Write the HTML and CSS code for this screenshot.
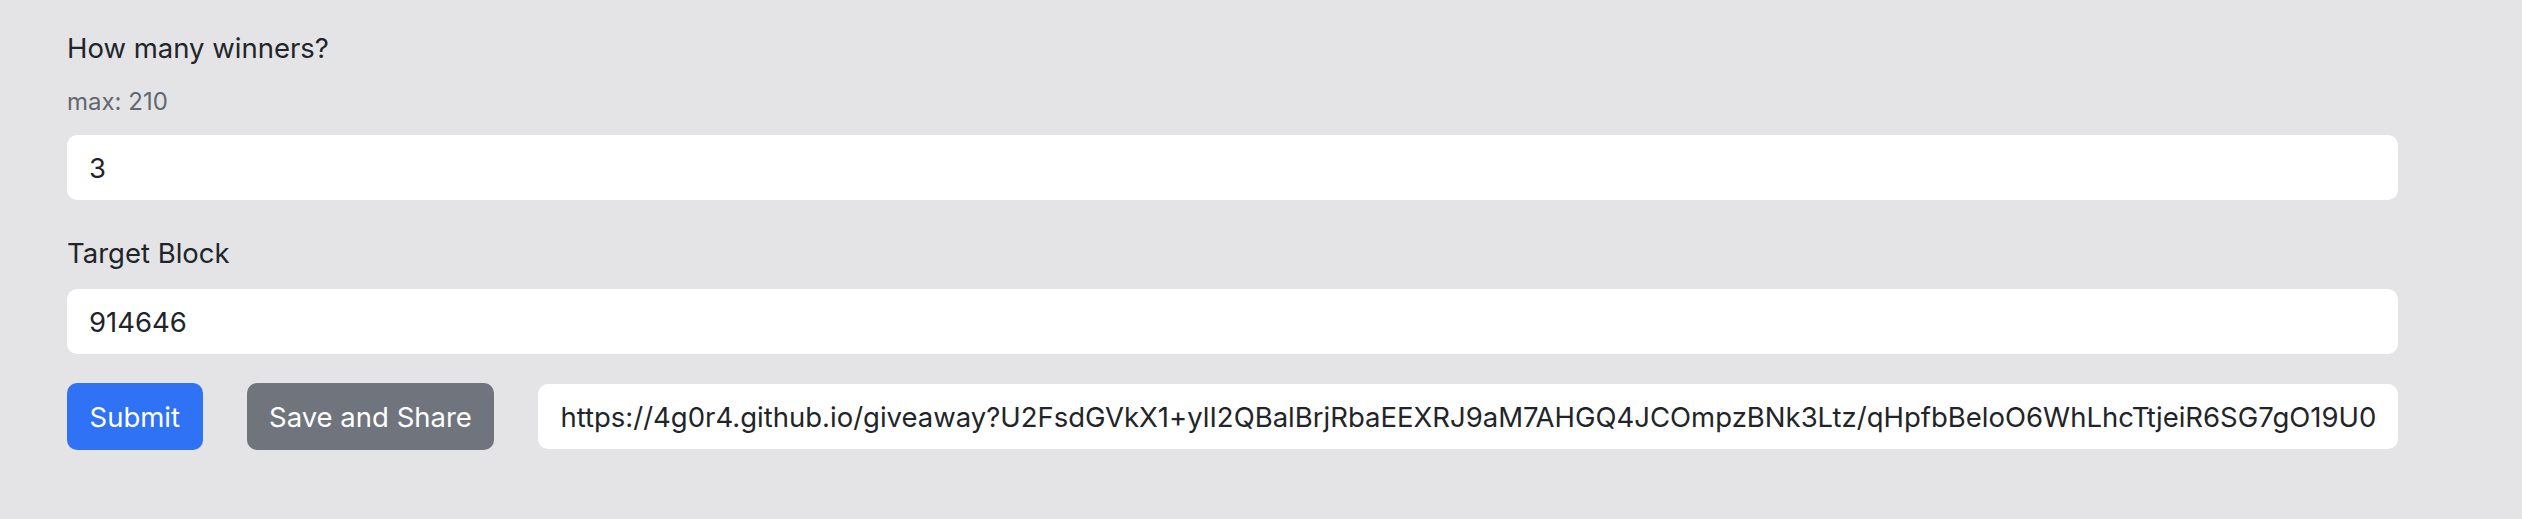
FILE: index.html
```html
<!DOCTYPE html>
<html lang="en">
<head>
<meta charset="utf-8">
<title>Giveaway</title>
<link rel="stylesheet" href="styles.css">
</head>
<body>
<main class="page">
  <form class="giveaway-form" onsubmit="return false">
    <label class="field-label" for="winners">How many winners?</label>
    <div class="hint">max: 210</div>
    <input class="field-input field-input-winners" id="winners" type="text" value="3">

    <label class="field-label field-label-target" for="block">Target Block</label>
    <input class="field-input" id="block" type="text" value="914646">

    <div class="actions">
      <button class="btn btn-primary" type="submit">Submit</button>
      <button class="btn btn-secondary" type="button">Save and Share</button>
      <input class="field-input share-url" type="text" readonly value="https://4g0r4.github.io/giveaway?U2FsdGVkX1+ylI2QBalBrjRbaEEXRJ9aM7AHGQ4JCOmpzBNk3Ltz/qHpfbBeloO6WhLhcTtjeiR6SG7gO19U0xk3Pq8ZrTmWc2LdA7vHn">
    </div>
  </form>
</main>
</body>
</html>
```
FILE: styles.css
```css
html, body {
  margin: 0;
  padding: 0;
  background: #e4e4e7;
}

body {
  font-family: Inter, "Liberation Sans", Arial, sans-serif;
  color: #212529;
}

.page {
  padding: 28px 124px 40px 67px;
}

.giveaway-form {
  display: flex;
  flex-direction: column;
}

.field-label {
  display: block;
  font-size: 27.5px;
  line-height: 40px;
  margin: 0;
}

.field-label-target {
  margin-top: 33px;
  margin-bottom: 16px;
}

.hint {
  font-size: 24px;
  line-height: 35px;
  color: #62686f;
  margin-top: 16px;
  margin-bottom: 16px;
}

.field-input {
  box-sizing: border-box;
  display: block;
  width: 100%;
  height: 65px;
  margin: 0;
  padding: 0 22px;
  border: none;
  border-radius: 10px;
  background: #ffffff;
  font-family: inherit;
  font-size: 27.5px;
  color: #212529;
  outline: none;
}

.actions {
  display: flex;
  align-items: center;
  gap: 44px;
  margin-top: 29px;
}

.btn {
  box-sizing: border-box;
  height: 67px;
  padding: 0 22.5px;
  border: none;
  border-radius: 10px;
  font-family: inherit;
  font-size: 27.5px;
  color: #ffffff;
  cursor: pointer;
  flex: none;
}

.btn-primary {
  background: #2f72f5;
}

.btn-secondary {
  background: #70757d;
}

.share-url {
  flex: 1;
  width: auto;
  min-width: 0;
}
```
